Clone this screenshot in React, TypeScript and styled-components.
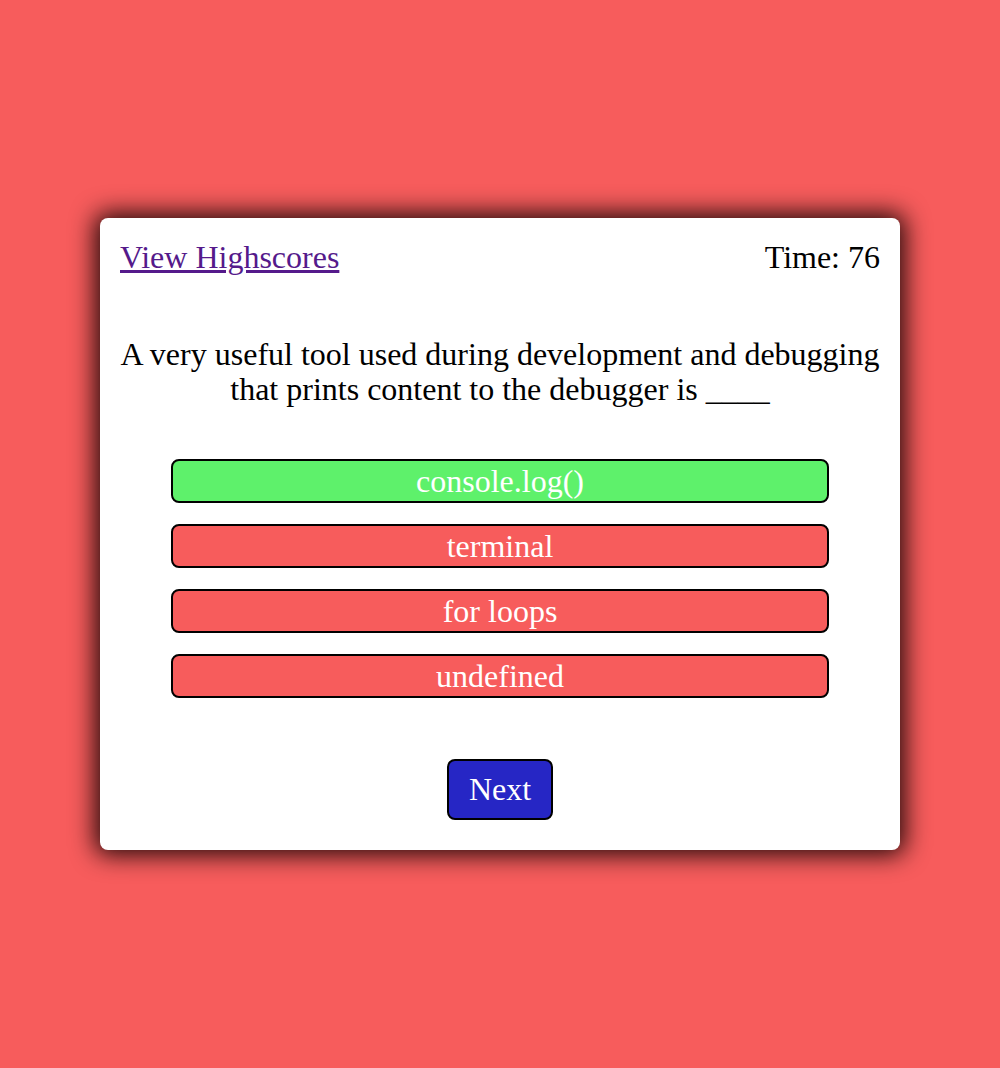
import React from "react";
import styled, { createGlobalStyle } from "styled-components";

const Global = createGlobalStyle`
  html, body { margin: 0; padding: 0; }
  body {
    background: #f75c5c;
    font-family: "Liberation Serif", "Times New Roman", serif;
    min-height: 1068px;
  }
`;

const Page = styled.div`
  height: 1068px;
  display: flex;
  align-items: center;
  justify-content: center;
`;

const Card = styled.div`
  width: 800px;
  height: 632px;
  box-sizing: border-box;
  background: #fff;
  border-radius: 8px;
  box-shadow: 0 0 24px 5px rgba(10, 0, 0, 0.9);
  padding: 21px 20px 30px;
  display: flex;
  flex-direction: column;
  align-items: center;
`;

const Header = styled.div`
  width: 100%;
  display: flex;
  justify-content: space-between;
  align-items: center;
  font-size: 32px;
  line-height: 37px;
`;

const Link = styled.a`
  color: #551a8b;
  text-decoration: underline;
  cursor: pointer;
`;

const Timer = styled.span`
  color: #000;
`;

const Question = styled.p`
  margin: 61px 0 0;
  font-size: 32px;
  line-height: 35px;
  text-align: center;
  color: #000;
`;

const Answers = styled.div`
  margin-top: 52px;
  width: 658px;
  display: flex;
  flex-direction: column;
  gap: 21px;
`;

const Answer = styled.button<{ $correct?: boolean }>`
  height: 44px;
  box-sizing: border-box;
  border: 2px solid #000;
  border-radius: 8px;
  background: ${(p) => (p.$correct ? "#5ef16b" : "#f75c5c")};
  color: #fff;
  font-family: inherit;
  font-size: 32px;
  line-height: 1;
  padding: 0;
  cursor: pointer;
`;

const NextButton = styled.button`
  margin-top: 61px;
  width: 106px;
  height: 61px;
  box-sizing: border-box;
  border: 2px solid #000;
  border-radius: 8px;
  background: #2626c5;
  color: #fff;
  font-family: inherit;
  font-size: 32px;
  padding: 0;
  cursor: pointer;
`;

const answers = [
  { text: "console.log()", correct: true },
  { text: "terminal", correct: false },
  { text: "for loops", correct: false },
  { text: "undefined", correct: false },
];

export default function App() {
  return (
    <>
      <Global />
      <Page>
        <Card>
          <Header>
            <Link>View Highscores</Link>
            <Timer>Time: 76</Timer>
          </Header>
          <Question>
            A very useful tool used during development and debugging
            <br />
            that prints content to the debugger is ____
          </Question>
          <Answers>
            {answers.map((a) => (
              <Answer key={a.text} $correct={a.correct}>
                {a.text}
              </Answer>
            ))}
          </Answers>
          <NextButton>Next</NextButton>
        </Card>
      </Page>
    </>
  );
}
